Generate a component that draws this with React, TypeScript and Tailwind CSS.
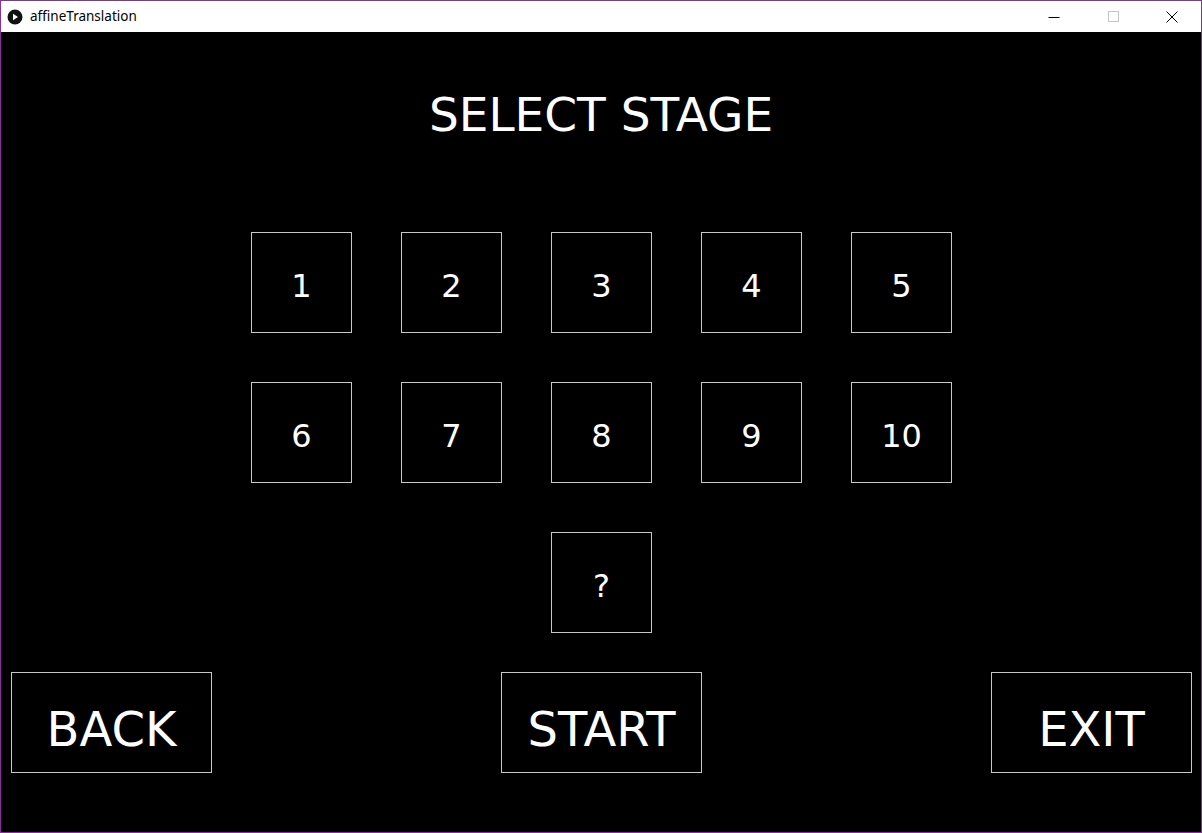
const STAGES = ["1", "2", "3", "4", "5", "6", "7", "8", "9", "10"];

const FONT = { fontFamily: '"DejaVu Sans", "Open Sans", sans-serif' };

function StageBox({ label }: { label: string }) {
  return (
    <div className="w-[101px] h-[101px] border border-[#c8c8c8] flex items-center justify-center pt-[7px] text-[32px] leading-none text-white">
      {label}
    </div>
  );
}

function BigButton({ label }: { label: string }) {
  return (
    <div className="w-[201px] h-[101px] border border-[#c8c8c8] flex items-center justify-center pt-[12px] text-[48px] leading-none text-white">
      {label}
    </div>
  );
}

function TitleBar() {
  return (
    <div className="h-[31px] bg-white flex items-center shrink-0">
      {/* app icon */}
      <svg width="16" height="16" viewBox="0 0 16 16" className="ml-[6px]">
        <circle cx="8" cy="8" r="7.5" fill="#111" />
        <path d="M6 4.8 L11 8 L6 11.2 Z" fill="#fff" />
      </svg>
      <span
        className="ml-[7px] text-[13.5px] text-black"
        style={{ fontFamily: '"Noto Sans", "Open Sans", sans-serif' }}
      >
        affineTranslation
      </span>
      <div className="ml-auto flex items-center h-full">
        <div className="w-[58px] h-full flex items-center justify-center pr-[4px]">
          <svg width="12" height="12" viewBox="0 0 12 12">
            <path d="M0.5 6.5 H11.5" stroke="#000" strokeWidth="1" />
          </svg>
        </div>
        <div className="w-[58px] h-full flex items-center justify-center">
          <svg width="12" height="12" viewBox="0 0 12 12">
            <rect x="0.5" y="0.5" width="10" height="10" fill="none" stroke="#c4c4c4" />
          </svg>
        </div>
        <div className="w-[58px] h-full flex items-center justify-center">
          <svg width="12" height="12" viewBox="0 0 12 12">
            <path d="M0.5 0.5 L11.5 11.5 M11.5 0.5 L0.5 11.5" stroke="#000" strokeWidth="1" />
          </svg>
        </div>
      </div>
    </div>
  );
}

export default function App() {
  return (
    <div className="w-[1202px] h-[833px] border border-[#892f99] flex flex-col bg-black overflow-hidden">
      <TitleBar />
      <div className="flex-1 flex flex-col bg-black text-white" style={FONT}>
        {/* heading */}
        <div className="pt-[59px] h-[105px] text-center text-[47px] leading-none">
          SELECT STAGE
        </div>

        {/* stage grid */}
        <div className="mt-[95px] pl-[250px] grid grid-cols-[repeat(5,101px)] gap-[49px]">
          {STAGES.map((s) => (
            <StageBox key={s} label={s} />
          ))}
          <div className="col-start-3">
            <StageBox label="?" />
          </div>
        </div>

        {/* bottom buttons */}
        <div className="mt-[39px] pl-[10px] pr-[9px] flex justify-between">
          <BigButton label="BACK" />
          <BigButton label="START" />
          <BigButton label="EXIT" />
        </div>
      </div>
    </div>
  );
}
